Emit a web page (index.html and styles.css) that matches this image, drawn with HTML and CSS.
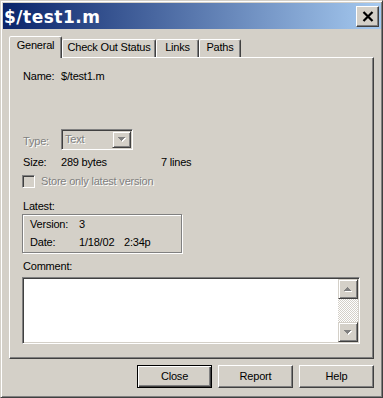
FILE: index.html
```html
<!DOCTYPE html>
<html lang="en">
    <head>
        <title>$/test1.m</title>
        <link rel="stylesheet" href="styles.css">
    </head>
    <body>
        <div class="window">
            <div class="titlebar">
                <span class="title">$/test1.m</span>
                <span class="title-close">
                    <svg width="12" height="11" viewBox="0 0 12 11"><path d="M1.5 1 L10.5 10 M10.5 1 L1.5 10" stroke="#000" stroke-width="2.2" fill="none"/></svg>
                </span>
            </div>
            <div class="content">
                <div class="tabs">
                    <div class="tab tab-active tab-general">General</div>
                    <div class="tab tab-checkout">Check Out Status</div>
                    <div class="tab tab-links">Links</div>
                    <div class="tab tab-paths">Paths</div>
                </div>
                <div class="panel">
                    <div class="field name-row"><span class="label">Name:</span><span>$/test1.m</span></div>
                    <div class="field type-row">
                        <span class="label disabled">Type:</span>
                        <div class="combo">
                            <span class="combo-text disabled">Text</span>
                            <span class="combo-btn">
                                <svg width="8" height="5" viewBox="0 0 8 5"><path d="M1 1h7v1H1z M2 2h5v1H2z M3 3h3v1H3z M4 4h1v1H4z" fill="#fff"/><path d="M0 0h7v1H0z M1 1h5v1H1z M2 2h3v1H2z M3 3h1v1H3z" fill="#808080"/></svg>
                            </span>
                        </div>
                    </div>
                    <div class="field size-row"><span class="label">Size:</span><span class="size-bytes">289 bytes</span><span>7 lines</span></div>
                    <div class="check-row"><span class="checkbox"></span><span class="disabled">Store only latest version</span></div>
                    <div class="section-label latest-label">Latest:</div>
                    <div class="group">
                        <div class="group-row"><span class="group-label">Version:</span><span>3</span></div>
                        <div class="group-row"><span class="group-label">Date:</span><span class="date">1/18/02</span><span>2:34p</span></div>
                    </div>
                    <div class="section-label comment-label">Comment:</div>
                    <div class="memo">
                        <div class="scrollbar">
                            <span class="scroll-btn">
                                <svg width="8" height="5" viewBox="0 0 8 5"><path d="M4 1h1v1H4z M3 2h3v1H3z M2 3h5v1H2z M1 4h7v1H1z" fill="#fff"/><path d="M3 0h1v1H3z M2 1h3v1H2z M1 2h5v1H1z M0 3h7v1H0z" fill="#808080"/></svg>
                            </span>
                            <span class="scroll-btn scroll-btn-down">
                                <svg width="8" height="5" viewBox="0 0 8 5"><path d="M1 1h7v1H1z M2 2h5v1H2z M3 3h3v1H3z M4 4h1v1H4z" fill="#fff"/><path d="M0 0h7v1H0z M1 1h5v1H1z M2 2h3v1H2z M3 3h1v1H3z" fill="#808080"/></svg>
                            </span>
                        </div>
                    </div>
                </div>
                <div class="buttons">
                    <button class="btn btn-default">Close</button>
                    <button class="btn">Report</button>
                    <button class="btn">Help</button>
                </div>
            </div>
        </div>
    </body>
</html>
```
FILE: styles.css
```css
:root {
    --face: #d4d0c8;
    --shadow: #808080;
    --dark: #404040;
    --light: #ffffff;
    --disabled-text: #808080;
    --title-start: #0a246a;
    --title-end: #a6caf0;
}

html, body {
    margin: 0;
    background-color: var(--face);
}

body {
    font-family: "Liberation Sans", Arial, sans-serif;
    font-size: 11px;
    line-height: 13px;
    letter-spacing: -0.2px;
    color: black;
}

.window {
    width: 383px;
    height: 398px;
    box-sizing: border-box;
    border: 1px solid;
    border-color: var(--face) var(--dark) var(--dark) var(--face);
    box-shadow: inset 1px 1px var(--light), inset -1px -1px var(--shadow);
    padding: 2px 1px 2px 2px;
}

.titlebar {
    height: 26px;
    display: flex;
    align-items: center;
    justify-content: space-between;
    background: linear-gradient(to right, var(--title-start), var(--title-end));
}

.title {
    color: white;
    font-family: "DejaVu Sans", Verdana, sans-serif;
    font-weight: bold;
    font-size: 17px;
    letter-spacing: 0.5px;
    line-height: 26px;
    padding: 1px 0 0 1px;
}

.title-close {
    width: 23px;
    height: 21px;
    box-sizing: border-box;
    border: 1px solid;
    border-color: var(--light) var(--dark) var(--dark) var(--light);
    box-shadow: inset -1px -1px var(--shadow);
    background-color: var(--face);
    display: flex;
    align-items: center;
    justify-content: center;
    margin-right: 2px;
    padding-top: 1px;
}

.content {
    padding: 7px 7px 0 6px;
}

/* tab strip */
.tabs {
    display: flex;
    align-items: flex-end;
    height: 21px;
    position: relative;
    z-index: 1;
}

.tab {
    box-sizing: border-box;
    height: 18px;
    padding-top: 1px;
    text-align: center;
    border: 1px solid;
    border-bottom: 0;
    border-color: var(--light) var(--dark) transparent var(--light);
    box-shadow: inset -1px 0 var(--shadow);
    border-radius: 2px 2px 0 0;
    background-color: var(--face);
}

.tab-active {
    height: 22px;
    margin-bottom: -1px;
    padding-top: 2px;
}

.tab-general { width: 53px; }
.tab-checkout { width: 94px; }
.tab-links { width: 43px; }
.tab-paths { width: 42px; }

.panel {
    box-sizing: border-box;
    height: 302px;
    border: 1px solid;
    border-color: var(--light) var(--dark) var(--dark) var(--light);
    box-shadow: inset -1px -1px var(--shadow);
    padding: 12px 0 0 12px;
}

.disabled {
    color: var(--disabled-text);
    text-shadow: 1px 1px 0 var(--light);
}

.field {
    display: flex;
    padding-left: 1px;
}

.label {
    width: 38px;
}

.type-row {
    margin-top: 46px;
    align-items: flex-start;
}

.type-row .label {
    padding-top: 6px;
}

.combo {
    width: 72px;
    height: 21px;
    box-sizing: border-box;
    display: flex;
    padding: 1px;
    border: 1px solid;
    border-color: var(--shadow) var(--light) var(--light) var(--shadow);
    box-shadow: inset 1px 1px var(--dark), inset -1px -1px var(--face);
}

.combo-text {
    flex: 1;
    padding-left: 2px;
    line-height: 17px;
}

.combo-btn {
    width: 19px;
    box-sizing: border-box;
    border: 1px solid;
    border-color: var(--face) var(--dark) var(--dark) var(--face);
    box-shadow: inset 1px 1px var(--light), inset -1px -1px var(--shadow);
    display: flex;
    align-items: center;
    justify-content: center;
}

.size-row {
    margin-top: 6px;
}

.size-bytes {
    width: 100px;
}

.check-row {
    display: flex;
    margin-top: 6px;
}

.checkbox {
    width: 13px;
    height: 13px;
    box-sizing: border-box;
    margin-right: 6px;
    border: 1px solid;
    border-color: var(--shadow) var(--light) var(--light) var(--shadow);
    box-shadow: inset 1px 1px var(--dark), inset -1px -1px var(--face);
}

.section-label {
    padding-left: 1px;
}

.latest-label {
    margin-top: 12px;
}

.group {
    width: 160px;
    height: 39px;
    box-sizing: border-box;
    margin-top: 1px;
    border: 1px solid var(--shadow);
    box-shadow: inset 1px 1px var(--light), 1px 1px var(--light);
    padding: 3px 0 0 7px;
}

.group-row {
    display: flex;
}

.group-row + .group-row {
    margin-top: 5px;
}

.group-label {
    width: 49px;
}

.date {
    width: 45px;
}

.comment-label {
    margin-top: 7px;
}

.memo {
    width: 338px;
    height: 67px;
    box-sizing: border-box;
    margin-top: 4px;
    display: flex;
    justify-content: flex-end;
    background-color: white;
    padding: 1px;
    border: 1px solid;
    border-color: var(--shadow) var(--light) var(--light) var(--shadow);
    box-shadow: inset 1px 1px var(--dark), inset -1px -1px var(--face);
}

.scrollbar {
    width: 20px;
    display: flex;
    flex-direction: column;
    background: repeating-conic-gradient(var(--face) 0 25%, var(--light) 0 50%) 0 0 / 2px 2px;
}

.scroll-btn {
    height: 20px;
    box-sizing: border-box;
    border: 1px solid;
    border-color: var(--face) var(--dark) var(--dark) var(--face);
    box-shadow: inset 1px 1px var(--light), inset -1px -1px var(--shadow);
    background-color: var(--face);
    display: flex;
    align-items: center;
    justify-content: center;
}

.scroll-btn-down {
    margin-top: auto;
}

/* dialog buttons */
.buttons {
    display: flex;
    justify-content: flex-end;
    gap: 6px;
    margin-top: 6px;
}

.btn {
    width: 75px;
    height: 23px;
    box-sizing: border-box;
    padding: 0;
    border: 1px solid;
    border-color: var(--light) var(--dark) var(--dark) var(--light);
    box-shadow: inset -1px -1px var(--shadow);
    background-color: var(--face);
    font: inherit;
    letter-spacing: inherit;
    color: black;
}

.btn-default {
    border-color: black;
    box-shadow: inset 1px 1px var(--light), inset -1px -1px var(--dark), inset -2px -2px var(--shadow);
}
```
